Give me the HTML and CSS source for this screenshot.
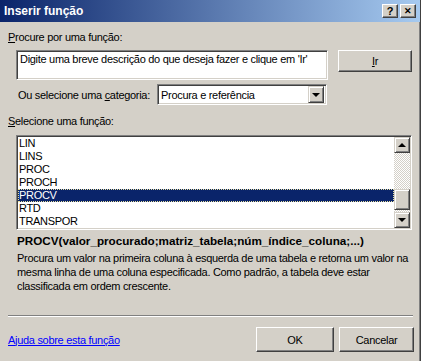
FILE: index.html
```html
<!DOCTYPE html>
<html lang="pt">
<head>
    <meta charset="UTF-8">
    <title>Inserir função</title>
    <link rel="stylesheet" href="styles.css">
</head>
<body>
    <div class="dialog">
        <div class="titlebar">
            <span class="title">Inserir função</span>
            <div class="title-buttons">
                <span class="title-btn">?</span>
                <span class="title-btn close">&#x2715;</span>
            </div>
        </div>

        <div class="content">
            <div class="label"><u>P</u>rocure por uma função:</div>
            <div class="search-row">
                <div class="textbox">Digite uma breve descrição do que deseja fazer e clique em 'Ir'</div>
                <button class="btn btn-go"><u>I</u>r</button>
            </div>

            <div class="category-row">
                <span class="category-label">Ou selecione uma <u>c</u>ategoria:</span>
                <div class="select">
                    <span class="select-value">Procura e referência</span>
                    <span class="select-arrow"><i class="tri down"></i></span>
                </div>
            </div>

            <div class="label label-list"><u>S</u>elecione uma função:</div>
            <div class="listbox">
                <ul class="items">
                    <li>LIN</li>
                    <li>LINS</li>
                    <li>PROC</li>
                    <li>PROCH</li>
                    <li class="selected">PROCV</li>
                    <li>RTD</li>
                    <li>TRANSPOR</li>
                </ul>
                <div class="scrollbar">
                    <span class="sb-btn"><i class="tri up"></i></span>
                    <span class="sb-track before"></span>
                    <span class="sb-thumb"></span>
                    <span class="sb-track after"></span>
                    <span class="sb-btn"><i class="tri down"></i></span>
                </div>
            </div>

            <div class="signature">PROCV(valor_procurado;matriz_tabela;núm_índice_coluna;...)</div>
            <p class="description">Procura um valor na primeira coluna à esquerda de uma tabela e retorna um valor na mesma linha de uma coluna especificada. Como padrão, a tabela deve estar classificada em ordem crescente.</p>

            <div class="separator"></div>

            <div class="footer">
                <a href="#" class="help-link">Ajuda sobre esta função</a>
                <button class="btn btn-ok">OK</button>
                <button class="btn btn-cancel">Cancelar</button>
            </div>
        </div>
    </div>
</body>
</html>
```

FILE: styles.css
```css
body {
    margin: 0;
    background-color: #d4d0c8;
    font-family: "Liberation Sans", Arial, sans-serif;
    font-size: 11px;
    letter-spacing: -0.3px;
    color: #000;
}

.dialog {
    width: 421px;
    height: 361px;
    box-sizing: border-box;
    border-right: 1px solid #404040;
    box-shadow: inset -1px 0 #808080;
    overflow: hidden;
}

/* title bar */
.titlebar {
    height: 22px;
    display: flex;
    align-items: center;
    background: linear-gradient(to right, #0a246a, #a6caf0);
}

.title {
    padding-left: 4px;
    color: #fff;
    font-weight: bold;
    font-size: 12px;
    letter-spacing: 0;
}

.title-buttons {
    margin-left: auto;
    margin-right: 4px;
    display: flex;
    gap: 2px;
}

.title-btn {
    width: 14px;
    height: 12px;
    display: flex;
    align-items: center;
    justify-content: center;
    background-color: #d4d0c8;
    border: 1px solid;
    border-color: #fff #404040 #404040 #fff;
    box-shadow: inset -1px -1px #808080;
    font-weight: bold;
    font-size: 11px;
    line-height: 12px;
    letter-spacing: 0;
}

.title-btn.close {
    font-size: 9px;
}

/* body */
.content {
    padding: 0 0 0 8px;
}

.label {
    margin-top: 9px;
    line-height: 13px;
}

.search-row {
    margin-top: 6px;
    display: flex;
    align-items: flex-start;
}

.textbox {
    margin-left: 8px;
    width: 312px;
    height: 30px;
    box-sizing: border-box;
    padding: 2px 3px;
    background-color: #fff;
    border: 1px solid;
    border-color: #808080 #fff #fff #808080;
    box-shadow: inset 1px 1px #404040, inset -1px -1px #d4d0c8;
    line-height: 13px;
    white-space: nowrap;
    overflow: hidden;
}

.btn {
    box-sizing: border-box;
    padding: 0;
    background-color: #d4d0c8;
    border: 1px solid;
    border-color: #fff #404040 #404040 #fff;
    box-shadow: inset -1px -1px #808080;
    font-family: inherit;
    font-size: 11px;
    letter-spacing: inherit;
    color: #000;
}

.btn-go {
    margin-left: 10px;
    width: 74px;
    height: 22px;
}

.category-row {
    margin-top: 4px;
    display: flex;
    align-items: center;
}

.category-label {
    margin-left: 10px;
    width: 139px;
    white-space: nowrap;
}

.select {
    width: 170px;
    height: 21px;
    box-sizing: border-box;
    display: flex;
    align-items: center;
    padding: 2px;
    background-color: #fff;
    border: 1px solid;
    border-color: #808080 #fff #fff #808080;
    box-shadow: inset 1px 1px #404040, inset -1px -1px #d4d0c8;
}

.select-value {
    flex: 1;
    padding-left: 1px;
}

.select-arrow {
    width: 16px;
    height: 17px;
    box-sizing: border-box;
    display: flex;
    align-items: center;
    justify-content: center;
    background-color: #d4d0c8;
    border: 1px solid;
    border-color: #d4d0c8 #404040 #404040 #d4d0c8;
    box-shadow: inset 1px 1px #fff, inset -1px -1px #808080;
}

.tri {
    width: 0;
    height: 0;
    border-left: 4px solid transparent;
    border-right: 4px solid transparent;
}

.tri.down {
    border-top: 4px solid #000;
}

.tri.up {
    border-bottom: 4px solid #000;
}

/* function list */
.label-list {
    margin-top: 10px;
}

.listbox {
    margin-top: 7px;
    margin-left: 8px;
    width: 396px;
    height: 95px;
    box-sizing: border-box;
    display: flex;
    background-color: #fff;
    border: 1px solid;
    border-color: #808080 #fff #fff #808080;
    box-shadow: inset 1px 1px #404040, inset -1px -1px #d4d0c8;
    padding: 1px;
}

.items {
    flex: 1;
    list-style: none;
    margin: 0;
    padding: 0;
}

.items li {
    height: 13px;
    line-height: 13px;
    padding-left: 1px;
}

.items li.selected {
    background-color: #0a246a;
    color: #fff;
    outline: 1px dotted #e8e0a0;
    outline-offset: -1px;
}

.scrollbar {
    width: 16px;
    display: flex;
    flex-direction: column;
}

.sb-btn,
.sb-thumb {
    box-sizing: border-box;
    display: flex;
    align-items: center;
    justify-content: center;
    background-color: #d4d0c8;
    border: 1px solid;
    border-color: #d4d0c8 #404040 #404040 #d4d0c8;
    box-shadow: inset 1px 1px #fff, inset -1px -1px #808080;
}

.sb-btn {
    height: 16px;
}

.sb-thumb {
    height: 21px;
}

.sb-track {
    background-color: #fff;
    background-image: conic-gradient(#d4d0c8 25%, #fff 0 50%, #d4d0c8 0 75%, #fff 0);
    background-size: 2px 2px;
}

.sb-track.before {
    height: 36px;
}

.sb-track.after {
    height: 2px;
}

/* description */
.signature {
    margin-top: 4px;
    margin-left: 9px;
    font-weight: bold;
    font-size: 11.7px;
    letter-spacing: 0;
    line-height: 13px;
}

.description {
    margin: 4px 0 0 9px;
    width: 400px;
    line-height: 14px;
}

.separator {
    margin-top: 22px;
    width: 405px;
    height: 1px;
    background-color: #808080;
    border-bottom: 1px solid #fff;
}

.footer {
    margin-top: 10px;
    display: flex;
    align-items: center;
}

.help-link {
    color: #0000ff;
    text-decoration: underline;
}

.btn-ok {
    margin-left: auto;
    width: 78px;
    height: 25px;
}

.btn-cancel {
    margin-left: 5px;
    margin-right: 6px;
    width: 75px;
    height: 25px;
}
```
